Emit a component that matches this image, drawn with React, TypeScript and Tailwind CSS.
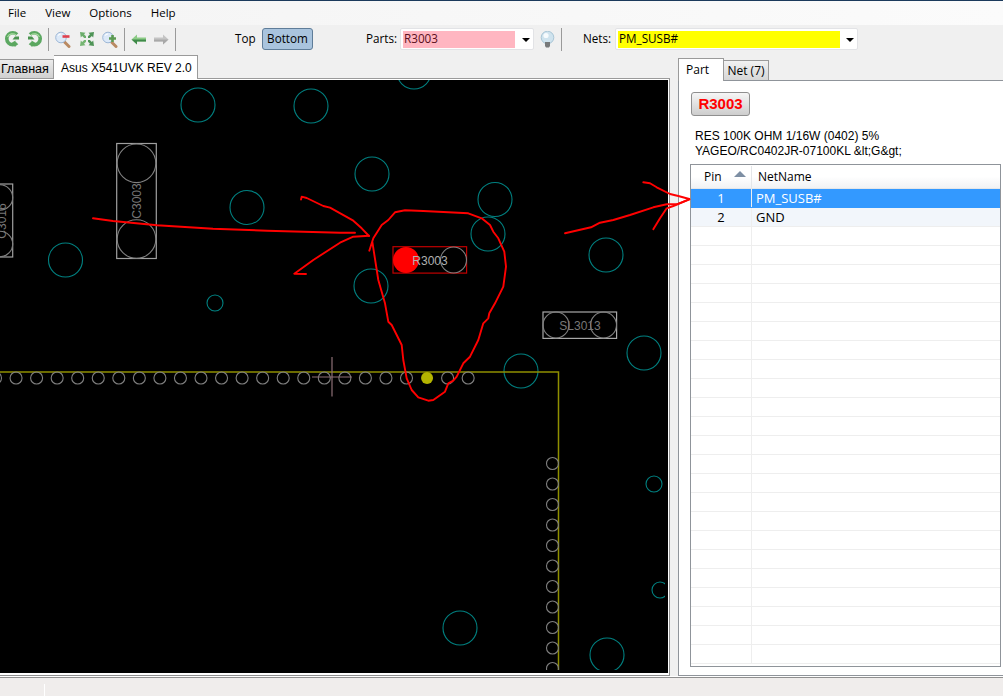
import React from "react";

const teal = [
  [198, 105, 17], [311, 106, 17], [414, 72, 17], [372, 174, 17], [495, 199.5, 17], [488, 234, 17],
  [606, 255, 17], [371, 286, 17], [521, 371, 17], [644, 353, 17], [247, 207.5, 17], [65.5, 260, 17],
  [215, 303, 8], [654, 484, 8], [660, 590, 8], [607, 655, 17], [460, 628, 17],
];

const bottomPins = Array.from({ length: 24 }, (_, i) => -4.5 + i * 20.55);
const sidePins = Array.from({ length: 11 }, (_, i) => 463.5 + i * 20.5);
const rows = Array.from({ length: 25 }, (_, i) => i);

const ink = [
  "M93 218.3L113 221L157 225.3L213 228.7L267 230.7L340 232.7L355 232.7",
  "M301 199.5L301.7 196.7L306.7 198L323.3 206L330 207.7L353.3 220.7L361.7 228.3L369 236",
  "M369 235.7L353.3 236.7L340 242.7L313.3 260L294.3 273.7L306 274",
  "M369.3 250.7L373.3 238.3L381.7 225L388.3 220L395 212.3L405 210.3L423.3 211L468.3 213.3L481.7 218.3L490 225L493.3 231.7L498.3 238.3L504.3 251.7L506 266.7L503.3 286.7L495 303.3L489.3 313.3L488.3 318.3L483.3 323.3L478.3 340L470 356.7L463.3 363.3L456.7 376.7L453.3 380.7L448.3 383.3L445 391.7L433.3 400L428.3 400.7L418.3 397.3L411.7 390L406.7 378.3L403.3 360L401.7 345L391.7 325L388.3 321.7L385 303.3L378.3 280L372.3 241.7",
  "M565 233.3L591 227.3L600 222.7L613.3 220L630 215L653.3 207.3L666.7 204.3L676.7 204.3L689.3 199.3",
  "M643.3 182.3L650 183.3L656.7 187.3L670 194L678.3 196L689.3 199",
  "M653.3 229.3L660 218.3L666.7 208.3L673.3 206L689.3 199.3",
];

function Refresh({ flip }: { flip?: boolean }) {
  return (
    <svg width="16" height="18" viewBox="0 0 16 18" className={flip ? "-scale-x-100" : ""}>
      <path d="M13 4.5A6 6 0 1 0 13 13" fill="none" stroke="#5ca862" strokeWidth="3.6" />
      <path d="M12 5A5.5 5.5 0 0 0 3.5 7" fill="none" stroke="#a6dc9f" strokeWidth="1.2" />
      <path d="M15 9.5H8.5L11 6.5H15Z" fill="#4a9350" />
      <path d="M6.5 13.5L11.5 10.5V17Z" fill="#5aa75e" />
    </svg>
  );
}

function Lens({ plus }: { plus?: boolean }) {
  return (
    <svg width="16" height="17" viewBox="0 0 16 17">
      <path d="M9 10.5L14 15.5" stroke="#b98a63" strokeWidth="3" strokeLinecap="round" />
      <circle cx="6" cy="6.5" r="5.3" fill="#dce9f8" stroke="#9db7d6" />
      <path d="M3 4.5A4 4 0 0 1 6 3" fill="none" stroke="#ffffff" strokeWidth="1.2" />
      {plus ? (
        <path d="M10.5 4V11M7 7.5H14" stroke="#5c9a52" strokeWidth="2.6" />
      ) : (
        <path d="M7.5 5.5H14.5" stroke="#e0404f" strokeWidth="2.6" />
      )}
    </svg>
  );
}

function Fit() {
  return (
    <svg width="16" height="16" viewBox="0 0 16 16">
      <path d="M1 1L6.5 1.8L5 3.2L7 5.2V7H5.2L3.2 5L1.8 6.5Z" fill="#6bad6b" />
      <path d="M15 1L9.5 1.8L11 3.2L9 5.2V7H10.8L12.8 5L14.2 6.5Z" fill="#4f9457" />
      <path d="M1 15L6.5 14.2L5 12.8L7 10.8V9H5.2L3.2 11L1.8 9.5Z" fill="#76b673" />
      <path d="M15 15L9.5 14.2L11 12.8L9 10.8V9H10.8L12.8 11L14.2 9.5Z" fill="#4f9457" />
    </svg>
  );
}

function Arrow({ dir }: { dir: "left" | "right" }) {
  if (dir === "right") {
    return (
      <svg width="15" height="11" viewBox="0 0 15 11">
        <path d="M0 3.5H9V0.5L14.5 5.5L9 10.5V7.5H0Z" fill="#c4c4c4" />
        <path d="M0 5.5H14.5L9 10.5V7.5H0Z" fill="#a9a9a9" />
      </svg>
    );
  }
  return (
    <svg width="15" height="11" viewBox="0 0 15 11">
      <path d="M15 3.5H6V0.5L0.5 5.5L6 10.5V7.5H15Z" fill="#8ccb86" />
      <path d="M15 5.5H0.5L6 10.5V7.5H15Z" fill="#3f8a4a" />
    </svg>
  );
}

function Bulb() {
  return (
    <svg width="15" height="17" viewBox="0 0 15 17">
      <circle cx="7.5" cy="6.5" r="6.3" fill="#cfe3ee" stroke="#a9c6d6" />
      <circle cx="6" cy="4.5" r="2.6" fill="#f7fbfd" />
      <path d="M5 11H10V15L9 16.5H6L5 15Z" fill="#77797a" />
    </svg>
  );
}

function Sep() {
  return <div className="w-px h-[23px] bg-[#9a9a9a]" />;
}

function Combo({ value, width, fill, fillWidth, dark }: { value: string; width: string; fill: string; fillWidth: string; dark?: boolean }) {
  return (
    <div className={`${width} h-[22px] bg-white border border-[#e2e3e6] rounded-[2px] flex items-center pl-[2px] relative`}>
      <div className={`${fill} ${fillWidth} h-[17px] flex items-center pl-[1px] leading-none ${dark ? "text-[#000]" : "text-[#5a1020]"}`}>
        {value}
      </div>
      <div className="absolute right-[3px] top-[9px] w-0 h-0 border-l-[4px] border-r-[4px] border-t-[4px] border-l-transparent border-r-transparent border-t-black" />
    </div>
  );
}

function Board() {
  return (
    <svg width="668" height="593" viewBox="0 80 668 593" className="block bg-black">
      <defs>
        <clipPath id="board-clip">
          <rect x="0" y="80" width="665" height="590" />
        </clipPath>
      </defs>
      <g clipPath="url(#board-clip)" fill="none">
        {teal.map(([cx, cy, r]) => (
          <circle key={`${cx}-${cy}`} cx={cx} cy={cy} r={r} stroke="#008080" strokeWidth="1.1" />
        ))}
        <path d="M0 372H558.5V670" stroke="#8f8f00" strokeWidth="1.5" />
        {bottomPins.map((x, i) =>
          i === 21 ? (
            <circle key={x} cx={x} cy="378" r="6" fill="#b4b400" />
          ) : (
            <circle key={x} cx={x} cy="378" r="6" stroke="#7f7f7f" strokeWidth="1.1" />
          )
        )}
        {sidePins.map((y) => (
          <circle key={y} cx="552.5" cy={y} r="6" stroke="#7f7f7f" strokeWidth="1.1" />
        ))}

        <rect x="116.7" y="143.5" width="39.6" height="115" stroke="#a0a0a0" strokeWidth="1.2" />
        <circle cx="136.5" cy="163.3" r="19.3" stroke="#808080" strokeWidth="1.1" />
        <circle cx="136.5" cy="239" r="19.3" stroke="#808080" strokeWidth="1.1" />

        <rect x="-10" y="184" width="22.7" height="73" stroke="#a0a0a0" strokeWidth="1.2" />
        <circle cx="0" cy="197.5" r="12.7" stroke="#808080" strokeWidth="1.1" />
        <circle cx="0" cy="244" r="12.7" stroke="#808080" strokeWidth="1.1" />

        <rect x="393" y="246.7" width="73.6" height="26.4" stroke="#c00000" strokeWidth="1.2" />
        <circle cx="406" cy="260" r="13" fill="#ff0000" />
        <circle cx="453.5" cy="260" r="13" stroke="#808080" strokeWidth="1.1" />

        <rect x="543" y="312" width="73.6" height="26.4" stroke="#a8a8a8" strokeWidth="1.2" />
        <circle cx="556" cy="325" r="13" stroke="#808080" strokeWidth="1.1" />
        <circle cx="603.5" cy="325" r="13" stroke="#808080" strokeWidth="1.1" />

        <path d="M332 357V396.5M312 377H352" stroke="#8d6f76" strokeWidth="1.2" />
      </g>
      <g fontFamily="'Liberation Sans', sans-serif" fontSize="12" textAnchor="middle">
        <text x="0" y="0" fill="#777777" transform="translate(141,201) rotate(-90)">C3003</text>
        <text x="0" y="0" fill="#777777" transform="translate(6,221) rotate(-90)">C3016</text>
        <text x="430" y="264.5" fill="#b0b0b0">R3003</text>
        <text x="580" y="329.5" fill="#777777">SL3013</text>
      </g>
    </svg>
  );
}

export default function App() {
  return (
    <div className="relative flex flex-col w-[1003px] h-[696px] overflow-hidden bg-[#f0f0f0] text-[12px] text-black font-['Open_Sans',sans-serif]">
      <div className="h-px bg-[#1b3a5c]" />

      <div className="h-6 flex items-center gap-[19px] pl-2 text-[11.5px] bg-gradient-to-r from-[#f4f4f4] to-[#fbfbfb]">
        <span>File</span>
        <span>View</span>
        <span>Options</span>
        <span>Help</span>
      </div>

      <div className="h-7 flex items-center text-[11.7px]">
        <div className="ml-[4px]"><Refresh /></div>
        <div className="ml-[7px]"><Refresh flip /></div>
        <div className="ml-[5px]"><Sep /></div>
        <div className="ml-[6px]"><Lens /></div>
        <div className="ml-[8px]"><Fit /></div>
        <div className="ml-[7px]"><Lens plus /></div>
        <div className="ml-[6px]"><Sep /></div>
        <div className="ml-[6px]"><Arrow dir="left" /></div>
        <div className="ml-[8px]"><Arrow dir="right" /></div>
        <div className="ml-[6px]"><Sep /></div>
        <span className="ml-[59px] w-[27px]">Top</span>
        <div className="w-[51px] h-[22px] flex items-center justify-center rounded-[3px] border border-[#5f7d99] bg-[#a9c4de]">Bottom</div>
        <span className="ml-[53px] w-[34px]">Parts:</span>
        <Combo value="R3003" width="w-[134px]" fill="bg-[#ffb6c1]" fillWidth="w-[112px]" />
        <div className="ml-[6px]"><Bulb /></div>
        <div className="ml-[6px]"><Sep /></div>
        <span className="ml-[21px] w-[32px]">Nets:</span>
        <Combo value="PM_SUSB#" width="w-[243px]" fill="bg-[#ffff00]" fillWidth="w-[222px]" dark />
      </div>

      <div className="flex-1 flex flex-col border-b border-[#8f8f8f]">
        <div className="flex-1 flex">
          <div className="w-[670px] flex flex-col pt-[3px]">
            <div className="h-[23px] flex items-end border-b border-[#9a9a9a] font-['Liberation_Sans',sans-serif]">
              <div className="w-[54px] h-[19px] pl-px flex items-center border-t border-r border-[#9a9a9a] text-[12.6px] bg-gradient-to-b from-[#ececec] to-[#d0d0d0]">Главная</div>
              <div className="w-[144px] h-[24px] -mb-px pl-[7px] flex items-center bg-white border-t border-r border-[#9a9a9a]">Asus X541UVK REV 2.0</div>
            </div>
            <div className="flex-1 bg-white pt-px pb-[2px] border-r border-b border-[#8f8f8f]">
              <Board />
            </div>
          </div>

          <div className="ml-2 flex-1 flex flex-col pt-[5px]">
            <div className="h-[22px] flex items-end">
              <div className="w-[46px] h-[23px] -mb-px pl-[7px] flex items-center bg-white border-l border-t border-r border-[#9a9a9a] relative">Part</div>
              <div className="w-[45px] h-[20px] flex items-center justify-center border-t border-r border-[#9a9a9a] bg-gradient-to-b from-[#f2f2f2] to-[#d6d6d6]">Net (7)</div>
            </div>
            <div className="flex-1 bg-white border-l border-t border-b border-[#8f949a] pl-[11px] pt-[11px] flex flex-col">
              <div className="ml-[1px] w-[59px] h-[24px] flex items-center justify-center rounded-[3px] border border-[#8f8f8f] bg-gradient-to-b from-[#f6f6f6] to-[#cdcdcd] font-['Liberation_Sans',sans-serif] font-bold text-[15px] text-[#ff0000]">R3003</div>
              <div className="mt-[13px] ml-[5px] font-['Liberation_Sans',sans-serif] leading-[15px]">
                <div>RES 100K OHM 1/16W (0402) 5%</div>
                <div>YAGEO/RC0402JR-07100KL &amp;lt;G&amp;gt;</div>
              </div>
              <div className="mt-[5px] w-[311px] h-[503px] border border-[#8f949a] overflow-hidden">
                <div className="h-[24px] pt-px flex items-center bg-gradient-to-b from-white via-white to-[#f1f2f4] border-b border-[#e4e6e9]">
                  <div className="w-[61px] h-full pl-[13px] flex items-center relative border-r border-[#e4e6e9]">
                    <span>Pin</span>
                    <div className="absolute left-[43px] top-[5px] w-0 h-0 border-l-[6px] border-r-[6px] border-b-[6px] border-l-transparent border-r-transparent border-b-[#7d8ea3]" />
                  </div>
                  <div className="pl-[6px]">NetName</div>
                </div>
                {rows.map((i) => (
                  <div
                    key={i}
                    className={`h-[19px] flex items-center border-b text-[13px] ${
                      i === 0 ? "bg-[#3399ff] text-white border-[#3399ff]" : i === 1 ? "bg-[#f2f6fb] border-[#eeeeee]" : "border-[#eeeeee]"
                    }`}
                  >
                    <div className="w-[61px] h-full pt-px flex items-center justify-center border-r border-[#eeeeee]">
                      {i === 0 ? "1" : i === 1 ? "2" : ""}
                    </div>
                    <div className="pl-[4px] pt-px">{i === 0 ? "PM_SUSB#" : i === 1 ? "GND" : ""}</div>
                  </div>
                ))}
              </div>
            </div>
          </div>
        </div>
        <div className="h-px bg-white" />
      </div>

      <div className="h-[18px] flex items-end bg-[#f0edec]">
        <div className="ml-[44px] w-px h-[12px] bg-white" />
      </div>

      <svg width="1003" height="696" viewBox="0 0 1003 696" className="absolute left-0 top-0 pointer-events-none">
        {ink.map((d) => (
          <path key={d} d={d} fill="none" stroke="#ff0000" strokeWidth="1.9" strokeLinejoin="round" strokeLinecap="round" />
        ))}
      </svg>
    </div>
  );
}
